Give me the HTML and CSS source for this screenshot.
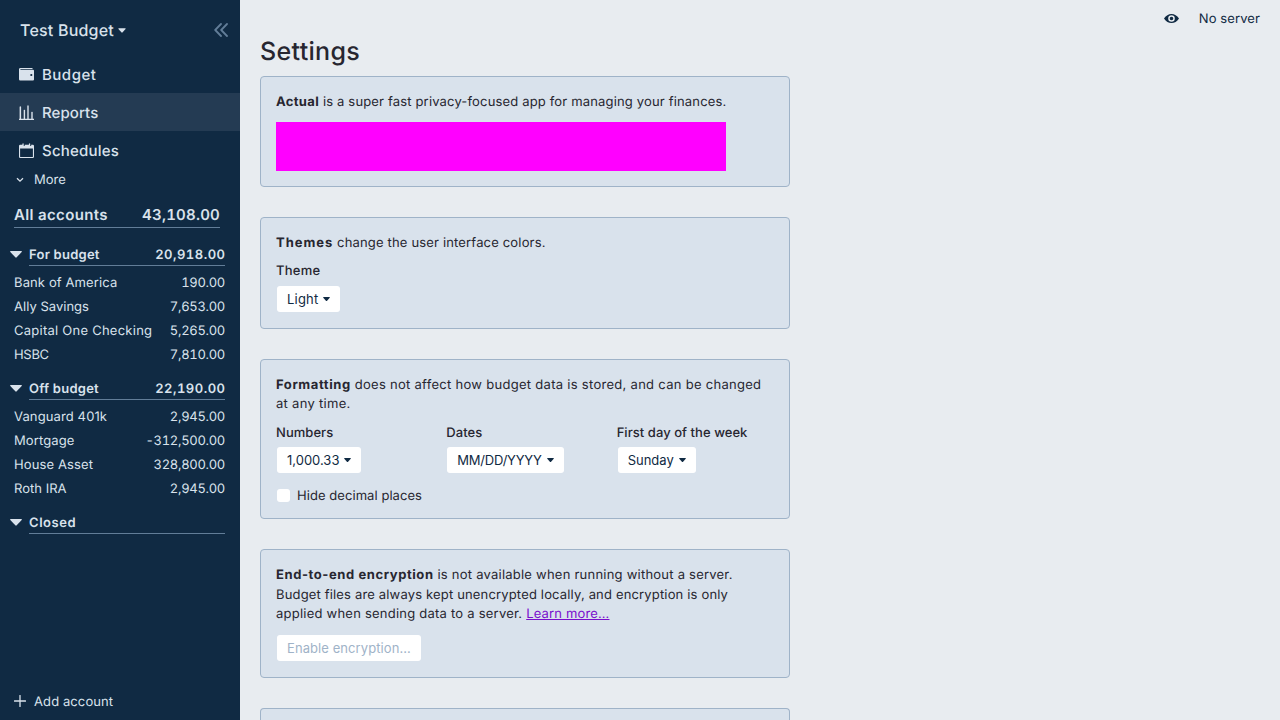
FILE: index.html
```
<!DOCTYPE html>
<html lang="en">
<head>
<meta charset="utf-8">
<title>Settings</title>
<link rel="stylesheet" href="styles.css">
</head>
<body>
<aside class="sidebar">
  <header class="budget-head">
    <div class="budget-name">Test Budget <svg class="caret" viewBox="0 0 9 5"><path d="M1 0h7q1 .2 .5 .9L5.2 4.6q-.7.7-1.4 0L.5.9Q0 .2 1 0z"/></svg></div>
    <svg class="collapse" viewBox="0 0 14 14"><path d="M7 1 1.2 7 7 13M13 1 7.2 7 13 13"/></svg>
  </header>
  <nav class="nav">
    <a class="nav-item loose"><svg class="nav-icon" viewBox="0 0 15 15"><path d="M0 2.3Q0 1 1.5 1H13q.7 0 .7 1H1.8q-.6 0-.6.4t.6.4H14q1 0 1 1v8.6q0 1-1 1H1.2Q0 13.4 0 12.2z"/><circle class="hole" cx="12.3" cy="8" r="1.1"/></svg>Budget</a>
    <a class="nav-item selected"><svg class="nav-icon" viewBox="0 0 15 15"><path d="M0 13.8h15V15H0zM.6 1.700q.8-.7 1.500 0V14H.6zM4.700 5q.7-.7 1.400 0v9H4.700zM8.300.700q.7-.9 1.400 0V14H8.300zM12.300 7q.7-.7 1.400 0v7h-1.400z"/></svg>Reports</a>
    <a class="nav-item"><svg class="nav-icon" viewBox="0 0 15 15"><path fill-rule="evenodd" d="M1.200 1.800h2.200V.8q.7-1 1.300 0v1.600q0 .5.5.5t.5-.5v-.6h4.200V.8q.7-1 1.300 0v1.600q0 .5.5.5t.5-.5v-.6h1.600Q15 1.800 15 3v10.800q0 1.200-1.200 1.200H1.200Q0 15 0 13.800V3Q0 1.800 1.200 1.800zM1.100 5.400v8q0 .5.5.5h11.800q.5 0 .5-.5v-8z"/></svg>Schedules</a>
    <a class="more"><svg class="chevron" viewBox="0 0 8 8"><path d="M1 2.200 4 5.200 7 2.200"/></svg>More</a>
  </nav>
  <section class="accounts">
    <div class="all-accounts"><span>All accounts</span><span class="amount">43,108.00</span></div>
    <div class="group">
      <div class="group-head"><svg class="toggle" viewBox="0 0 12 7"><path d="M.6 0h10.800q.8.200.3.900L6.700 6.300q-.7.700-1.400 0L.3.900Q-.2.200.6 0z"/></svg><div class="group-title"><span>For budget</span><span class="amount">20,918.00</span></div></div>
      <div class="account"><span>Bank of America</span><span class="amount">190.00</span></div>
      <div class="account"><span class="snug">Ally Savings</span><span class="amount">7,653.00</span></div>
      <div class="account"><span class="wide">Capital One Checking</span><span class="amount">5,265.00</span></div>
      <div class="account"><span class="caps">HSBC</span><span class="amount">7,810.00</span></div>
    </div>
    <div class="group">
      <div class="group-head"><svg class="toggle" viewBox="0 0 12 7"><path d="M.6 0h10.800q.8.200.3.900L6.700 6.300q-.7.700-1.400 0L.3.900Q-.2.200.6 0z"/></svg><div class="group-title"><span>Off budget</span><span class="amount">22,190.00</span></div></div>
      <div class="account"><span>Vanguard 401k</span><span class="amount">2,945.00</span></div>
      <div class="account"><span>Mortgage</span><span class="amount">-312,500.00</span></div>
      <div class="account"><span>House Asset</span><span class="amount">328,800.00</span></div>
      <div class="account"><span class="snug">Roth IRA</span><span class="amount">2,945.00</span></div>
    </div>
    <div class="group">
      <div class="group-head"><svg class="toggle" viewBox="0 0 12 7"><path d="M.6 0h10.800q.8.200.3.900L6.700 6.300q-.7.700-1.400 0L.3.900Q-.2.200.6 0z"/></svg><div class="group-title"><span class="loose">Closed</span></div></div>
    </div>
  </section>
  <a class="add-account"><svg class="plus" viewBox="0 0 12 12"><path d="M6 .5v11M.5 6h11"/></svg><span class="add-text">Add account</span></a>
</aside>
<main class="main">
  <div class="titlebar">
    <svg class="eye" viewBox="0 0 15 9"><path fill-rule="evenodd" d="M0 4.500Q3 0 7.500 0T15 4.500Q12 9 7.500 9T0 4.500zM7.500 1.200a3.300 3.300 0 1 0 0 6.600 3.300 3.300 0 0 0 0-6.600zM7.500 2.700a1.800 1.800 0 1 1 0 3.600 1.800 1.800 0 0 1 0-3.600z"/></svg>
    <span class="server">No server</span>
  </div>
  <h1 class="title">Settings</h1>
  <div class="cards">
    <section class="card">
      <p class="text"><strong class="tight">Actual</strong> is a super fast privacy-focused app for managing your finances.</p>
      <div class="banner"></div>
    </section>
    <section class="card">
      <p class="text"><strong class="airy">Themes</strong> change the user interface colors.</p>
      <div class="field"><span class="label light">Theme</span><button class="button word">Light<svg class="drop" viewBox="0 0 7 4"><path d="M.7 0h5.600q.9.100.4.700L4.100 3.700q-.6.500-1.200 0L.3.700Q-.2.100.7 0z"/></svg></button></div>
    </section>
    <section class="card">
      <p class="text narrow"><strong>Formatting</strong> does not affect how budget data is stored, and can be changed at any time.</p>
      <div class="columns">
        <div class="field"><span class="label">Numbers</span><button class="button">1,000.33<svg class="drop" viewBox="0 0 7 4"><path d="M.7 0h5.600q.9.100.4.700L4.100 3.700q-.6.500-1.200 0L.3.700Q-.2.100.7 0z"/></svg></button></div>
        <div class="field"><span class="label">Dates</span><button class="button caps">MM/DD/YYYY<svg class="drop" viewBox="0 0 7 4"><path d="M.7 0h5.600q.9.100.4.700L4.100 3.700q-.6.500-1.200 0L.3.700Q-.2.100.7 0z"/></svg></button></div>
        <div class="field"><span class="label">First day of the week</span><button class="button">Sunday<svg class="drop" viewBox="0 0 7 4"><path d="M.7 0h5.600q.9.100.4.700L4.100 3.700q-.6.500-1.200 0L.3.700Q-.2.100.7 0z"/></svg></button></div>
      </div>
      <label class="check"><span class="box"></span><span class="check-text">Hide decimal places</span></label>
    </section>
    <section class="card">
      <p class="text spread"><strong>End-to-end encryption</strong> is not available when running without a server. <span class="line">Budget files are always kept unencrypted locally, and encryption is only</span> applied when sending data to a server. <a class="link">Learn more…</a></p>
      <button class="button disabled">Enable encryption…</button>
    </section>
    <section class="card last"></section>
  </div>
</main>
</body>
</html>
```
FILE: styles.css
```
* { box-sizing: border-box; }
body { margin: 0; height: 720px; display: flex; overflow: hidden; background: #e8ecf0; color: #272630; font: 13px/16px Inter, "Liberation Sans", sans-serif; text-rendering: geometricPrecision; }
svg { display: block; flex: none; fill: currentColor; }
.amount { font-feature-settings: "tnum"; }

.sidebar { width: 240px; height: 720px; flex: none; display: flex; flex-direction: column; background: #102a43; color: #d9e2ec; }
.budget-head { height: 55px; padding: 5px 12px 0 20px; display: flex; align-items: center; justify-content: space-between; }
.budget-name { display: flex; align-items: center; gap: 4px; font-size: 16px; font-weight: 450; line-height: 20px; letter-spacing: .2px; }
.caret { width: 8px; height: 5px; }
.collapse { width: 14px; height: 14px; fill: none; stroke: #627d98; stroke-width: 1.8; stroke-linecap: round; stroke-linejoin: round; }
.nav { display: flex; flex-direction: column; }
.nav-item { height: 38px; padding: 1px 0 0 19px; display: flex; align-items: center; gap: 8px; font-size: 15px; font-weight: 460; line-height: 19px; letter-spacing: .2px; }
.loose { letter-spacing: .5px; }
.selected { background: #243b53; letter-spacing: .08px; }
.nav-icon { width: 15px; height: 15px; }
.hole { fill: #102a43; }
.more { height: 22px; padding-left: 16px; display: flex; align-items: center; gap: 10px; }
.chevron { width: 8px; height: 8px; fill: none; stroke: currentColor; stroke-width: 1.3; }
.accounts { flex: 1; }
.all-accounts { margin: 15px 20px 0 14px; height: 22px; display: flex; justify-content: space-between; font-size: 15px; font-weight: 600; line-height: 18px; letter-spacing: .37px; border-bottom: 1px solid #627d98; }
.all-accounts .amount { letter-spacing: .22px; }
.group { margin-top: 14px; }
.all-accounts + .group { margin-top: 18px; }
.group-head { height: 20px; display: flex; padding: 0 15px 0 10px; margin-bottom: 4px; }
.toggle { width: 12px; height: 7px; margin: 5px 7px 0 0; }
.group-title { flex: 1; display: flex; justify-content: space-between; padding-top: 1px; border-bottom: 1px solid #627d98; font-weight: 600; letter-spacing: .25px; }
.group-title .amount { letter-spacing: .5px; margin-right: -.5px; }
.group-title .loose { letter-spacing: .55px; }
.account { height: 24px; padding: 2px 15px 0 14px; display: flex; align-items: center; justify-content: space-between; letter-spacing: .12px; }
.account .amount { letter-spacing: -.3px; }
.account .wide { letter-spacing: .25px; }
.account .snug { letter-spacing: .02px; }
.account .caps { letter-spacing: -.3px; }
.add-account { height: 38px; padding-left: 14px; display: flex; align-items: center; gap: 8px; letter-spacing: .1px; }
.add-text { padding-top: 2px; }
.plus { width: 12px; height: 12px; fill: none; stroke: currentColor; stroke-width: 1.3; stroke-linecap: round; }

.main { flex: 1; height: 720px; overflow: hidden; padding-left: 20px; display: flex; flex-direction: column; }
.titlebar { height: 36px; flex: none; padding-right: 20px; display: flex; align-items: center; justify-content: flex-end; gap: 20px; color: #102a43; }
.server { padding-top: 2px; letter-spacing: .1px; }
.eye { width: 15px; height: 9px; }
.title { margin: 0; height: 40px; flex: none; padding-top: 1px; font-size: 25px; font-weight: 460; line-height: 30px; letter-spacing: .33px; }
.cards { display: flex; flex-direction: column; gap: 30px; width: 530px; flex: 1; min-height: 0; }
.card { flex: none; display: flex; flex-direction: column; align-items: flex-start; gap: 10px; padding: 15px; background: #d9e2ec; border: 1px solid #9fb3c8; border-radius: 4px; }
.last { flex: 1 0 12px; padding: 0; border-bottom: 0; border-radius: 4px 4px 0 0; }
.text { margin: 0 0 -1px; padding-top: 1px; line-height: 19.5px; letter-spacing: .165px; }
.narrow { max-width: 490px; letter-spacing: .29px; }
.spread { letter-spacing: .23px; }
.line { letter-spacing: .165px; }
.text strong { font-weight: 700; letter-spacing: .58px; }
.text .tight { letter-spacing: .35px; }
.text .airy { letter-spacing: .98px; }
.banner { width: 450px; height: 49.5px; background: #f0f; }
.field { display: flex; flex-direction: column; align-items: flex-start; gap: 6px; }
.label { font-weight: 500; line-height: 16.3px; letter-spacing: .05px; }
.columns .label { padding-top: 1px; margin-bottom: -1px; }
.light { font-weight: 450; letter-spacing: .25px; }
.button { height: 28px; margin: 0; padding: 0 10px; display: flex; align-items: center; gap: 5px; background: #fff; background-clip: padding-box; border: 1px solid transparent; border-radius: 4px; color: #102a43; font: inherit; letter-spacing: 0; }
.button.word { letter-spacing: .2px; }
.button.caps { letter-spacing: -.22px; }
.drop { width: 7px; height: 4px; }
.columns { width: 100%; display: grid; grid-template-columns: repeat(3, 1fr); gap: 13px; margin-bottom: 3px; }
.check { height: 16px; display: flex; align-items: center; gap: 6px; }
.check-text { padding-top: 2px; letter-spacing: .06px; }
.box { width: 15px; height: 15px; background: #fff; background-clip: padding-box; border: 1px solid transparent; border-radius: 4px; }
.button.disabled { color: #9fb3c8; letter-spacing: .08px; }
.link { color: #7a0ecc; text-decoration: underline; letter-spacing: .165px; }
```
